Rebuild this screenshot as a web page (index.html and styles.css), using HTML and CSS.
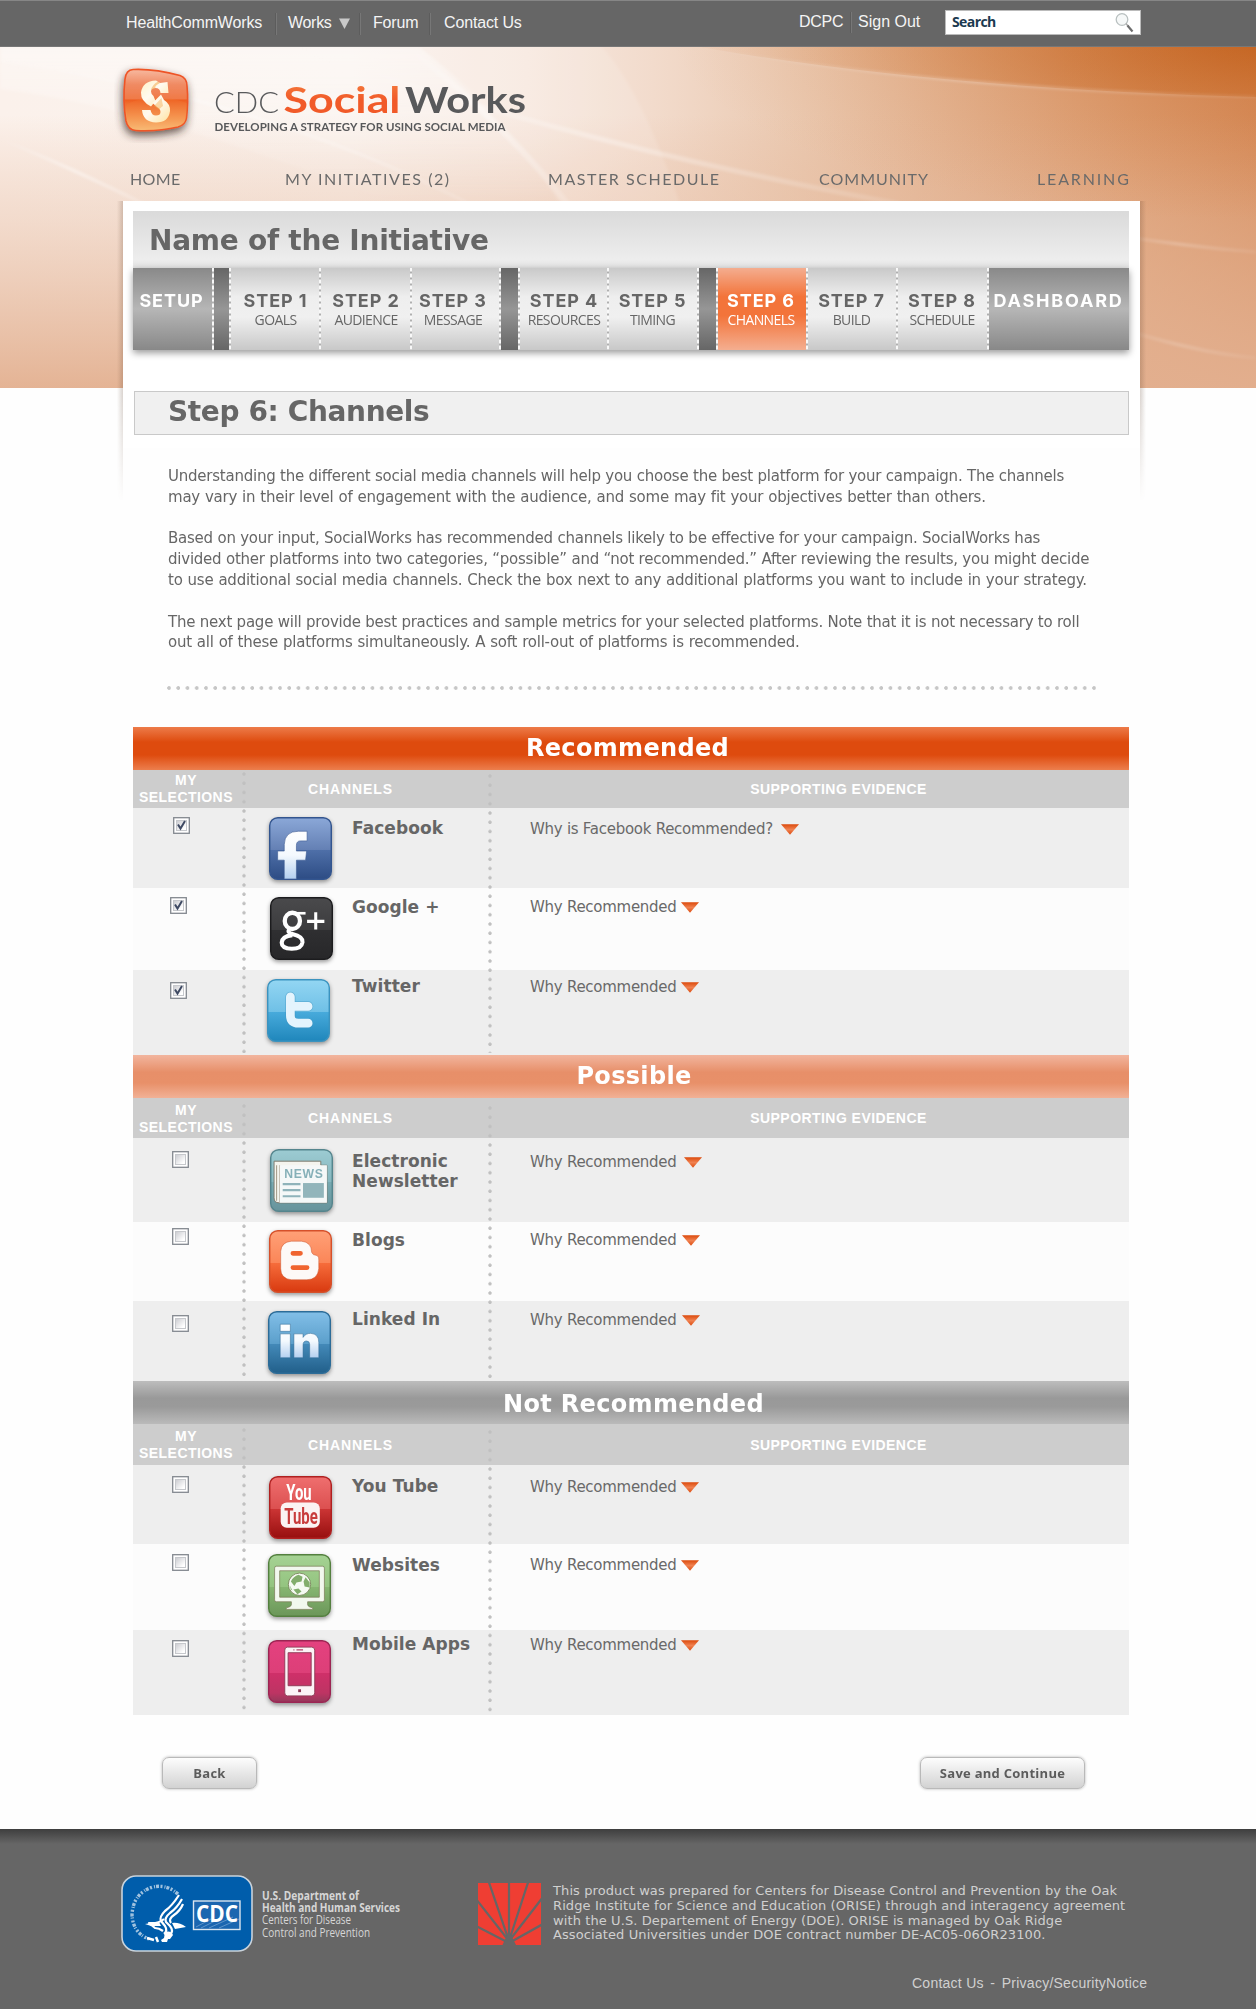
FILE: index.html
```html
<!DOCTYPE html>
<html lang="en">
<head>
<meta charset="utf-8">
<title>CDC SocialWorks - Step 6: Channels</title>
<link rel="stylesheet" href="styles.css">
</head>
<body>
<svg class="defs" aria-hidden="true">
  <defs>
    <linearGradient id="g-fb" x2="0" y2="1"><stop offset="0" stop-color="#8ba8d8"/><stop offset=".52" stop-color="#6480b4"/><stop offset=".53" stop-color="#4e6fa8"/><stop offset="1" stop-color="#2d4c84"/></linearGradient>
    <linearGradient id="g-gp" x2="0" y2="1"><stop offset="0" stop-color="#4a4a4c"/><stop offset=".52" stop-color="#3c3c3e"/><stop offset=".53" stop-color="#2f2f31"/><stop offset="1" stop-color="#272729"/></linearGradient>
    <linearGradient id="g-tw" x2="0" y2="1"><stop offset="0" stop-color="#93d6f3"/><stop offset=".52" stop-color="#6fc0e6"/><stop offset=".53" stop-color="#47aadb"/><stop offset="1" stop-color="#1f86bb"/></linearGradient>
    <linearGradient id="g-nw" x2="0" y2="1"><stop offset="0" stop-color="#9ccbd2"/><stop offset=".52" stop-color="#86b7bf"/><stop offset=".53" stop-color="#77a9b1"/><stop offset="1" stop-color="#67939b"/></linearGradient>
    <linearGradient id="g-bl" x2="0" y2="1"><stop offset="0" stop-color="#ffa077"/><stop offset=".52" stop-color="#fb8658"/><stop offset=".53" stop-color="#f66c3b"/><stop offset="1" stop-color="#d8390f"/></linearGradient>
    <linearGradient id="g-li" x2="0" y2="1"><stop offset="0" stop-color="#82bfe8"/><stop offset=".52" stop-color="#5b9fcb"/><stop offset=".53" stop-color="#4389b8"/><stop offset="1" stop-color="#215f8a"/></linearGradient>
    <linearGradient id="g-yt" x2="0" y2="1"><stop offset="0" stop-color="#ef6f6f"/><stop offset=".52" stop-color="#dc5050"/><stop offset=".53" stop-color="#cb3434"/><stop offset="1" stop-color="#970f0f"/></linearGradient>
    <linearGradient id="g-wb" x2="0" y2="1"><stop offset="0" stop-color="#a5d293"/><stop offset=".52" stop-color="#94c480"/><stop offset=".53" stop-color="#86b671"/><stop offset="1" stop-color="#6b9659"/></linearGradient>
    <linearGradient id="g-mb" x2="0" y2="1"><stop offset="0" stop-color="#e4417f"/><stop offset=".52" stop-color="#dd3f78"/><stop offset=".53" stop-color="#cf3069"/><stop offset=".85" stop-color="#bd3463"/><stop offset="1" stop-color="#93385a"/></linearGradient>
    <linearGradient id="g-glyph" x2="0" y2="1"><stop offset="0" stop-color="#fff"/><stop offset=".5" stop-color="#f4f9fe"/><stop offset="1" stop-color="#b4d0f0"/></linearGradient>
    <linearGradient id="g-tri" x2="0" y2="1"><stop offset="0" stop-color="#dc4a0c"/><stop offset=".5" stop-color="#f08150"/><stop offset="1" stop-color="#dc4a0c"/></linearGradient>
    <linearGradient id="g-box" x2="1" y2="1"><stop offset="0" stop-color="#c9cacf"/><stop offset=".8" stop-color="#fff"/></linearGradient>
    <symbol id="tri" viewBox="0 0 18 11"><path d="M0 .3h18L9 10.8z" fill="url(#g-tri)"/></symbol>
    <symbol id="check" viewBox="0 0 17 17">
      <rect x=".7" y=".7" width="15.600" height="15.600" fill="#fff" stroke="#83888f" stroke-width="1.300"/>
      <rect x="3.500" y="3.500" width="10" height="10" fill="url(#g-box)" stroke="#c6c8cc"/>
    </symbol>
  </defs>
</svg>

<div class="page">
  <div class="topbar">
    <nav class="topbar__links">
      <a class="tl tl--health">HealthCommWorks</a>
      <a class="tl tl--works">Works<svg width="11" height="11" viewBox="0 0 11 11"><path d="M0 .5h11L5.500 11z" fill="#c9c9c9"/></svg></a>
      <a class="tl tl--forum">Forum</a>
      <a class="tl tl--contact">Contact Us</a>
    </nav>
    <div class="topbar__user"><a class="tu tu--org">DCPC</a><a class="tu tu--out">Sign Out</a></div>
    <div class="search"><span>Search</span>
      <svg width="22" height="22" viewBox="0 0 22 22"><circle cx="8" cy="7.500" r="5.800" fill="#f6f8f8" stroke="#b9c0c0" stroke-width="1.300"/><path d="M12 11.500l2 2.500" stroke="#aaa" stroke-width="1.500"/><path d="M13.500 13.500l5 6" stroke="#6d6d6d" stroke-width="2.200"/></svg>
    </div>
  </div>

  <svg class="backdrop" viewBox="0 0 1256 341" preserveAspectRatio="none">
    <defs>
      <linearGradient id="b1"><stop offset="0" stop-color="#fbf1eb"/><stop offset=".28" stop-color="#faf2ed"/><stop offset=".42" stop-color="#f7e8df"/><stop offset=".52" stop-color="#f2dbcc"/><stop offset=".64" stop-color="#eac8af"/><stop offset=".78" stop-color="#e2b08d"/><stop offset=".9" stop-color="#dc9c70"/><stop offset="1" stop-color="#d68c5b"/></linearGradient>
      <linearGradient id="b2" x1="0" y1="0" x2="0" y2="1"><stop offset=".2" stop-color="#e3b090" stop-opacity="0"/><stop offset=".5" stop-color="#e6bba0" stop-opacity=".4"/><stop offset="1" stop-color="#e3b090" stop-opacity=".95"/></linearGradient>
      <radialGradient id="b3" gradientUnits="userSpaceOnUse" cx="0" cy="0" r="1" gradientTransform="translate(1290 -15) scale(620 190)"><stop offset="0" stop-color="#c25f1a"/><stop offset="1" stop-color="#d98a50" stop-opacity="0"/></radialGradient>
      <linearGradient id="b5" x1="0" y1="0" x2="0" y2="1"><stop offset="0" stop-color="#fff" stop-opacity=".35"/><stop offset="1" stop-color="#fff" stop-opacity="0"/></linearGradient>
      <linearGradient id="b6"><stop offset="0" stop-color="#fff" stop-opacity="0"/><stop offset=".5" stop-color="#fff" stop-opacity=".8"/><stop offset="1" stop-color="#fff" stop-opacity=".3"/></linearGradient>
      <filter id="soft" x="-5%" y="-20%" width="110%" height="140%"><feGaussianBlur stdDeviation="1.500"/></filter>
    </defs>
    <rect width="1256" height="341" fill="url(#b1)"/>
    <rect width="1256" height="341" fill="url(#b2)"/>
    <g filter="url(#soft)">
      <path d="M0 0H420Q500 60 560 155H390Q150 60 0 42z" fill="url(#b5)"/>
      <path d="M0 0H420Q490 60 560 155H470Q260 50 0 15z" fill="url(#b5)" opacity=".5"/>
      <path d="M420 -2Q500 60 560 157H680Q640 40 600 -2z" fill="#fff" opacity=".12"/>
    </g>
    <path d="M700 0Q940 42 1256 50V0z" fill="url(#b3)" opacity=".95"/>
    <rect x="640" width="616" height="200" fill="url(#b3)" opacity=".35"/>
    <g fill="none" stroke="url(#b6)" filter="url(#soft)">
      <path d="M700 0Q940 42 1256 50" stroke-width="2.500" opacity=".35"/>
      <path d="M300 0Q560 95 900 157" stroke-width="5" opacity=".4"/>
      <path d="M0 15Q260 50 470 157" stroke-width="3" opacity=".5"/>
      <path d="M400 -5Q500 70 570 160" stroke-width="6" opacity=".5"/>
      <path d="M0 92Q70 120 150 160" stroke-width="3" opacity=".6"/>
      <path d="M1100 186Q1190 200 1256 205" stroke-width="2.500" opacity=".35"/>
      <path d="M1100 275Q1190 305 1256 311" stroke-width="3" opacity=".25"/>
    </g>
  </svg>

  <header class="brand">
    <svg class="brand__mark" width="84" height="84" viewBox="0 0 84 84">
      <defs>
        <linearGradient id="m1" x2="0" y2="1"><stop offset="0" stop-color="#f7b9a0"/><stop offset=".25" stop-color="#f08a62"/><stop offset=".48" stop-color="#f07a48"/><stop offset=".5" stop-color="#ee5f22"/><stop offset=".8" stop-color="#f7a560"/><stop offset="1" stop-color="#fbd793"/></linearGradient>
        <linearGradient id="m2" x2="1" y2="1"><stop offset="0" stop-color="#fff3c8"/><stop offset=".45" stop-color="#fffaf0"/><stop offset="1" stop-color="#ffe3a0"/></linearGradient>
        <filter id="sh" x="-30%" y="-30%" width="160%" height="170%"><feDropShadow dx="-1" dy="4" stdDeviation="4" flood-color="#3a2a22" flood-opacity=".75"/></filter>
      </defs>
      <path filter="url(#sh)" d="M19 10.500Q40 9.500 66 16.500Q73 19 73 27Q74.500 42 72.500 59Q71.500 66 64 68Q45 72.500 22 71.500Q14 71 12 62Q8.500 42 11 20Q12 11 19 10.500z" fill="url(#m1)" stroke="#ee5427" stroke-width="1.600"/>
      <path d="M13 45Q40 32 73 44Q74 53 72 60Q71 66 64 67.500Q45 72 22 71Q14 70 12.500 62z" fill="#f27a35" opacity=".3"/>
      <g fill="url(#m2)">
        <path d="M54.500 34H46.500Q46 29 41.500 29Q37 29 37 32.500Q37 35 39.500 37L41.500 42L37 47.500Q26.500 42 27 33.500Q28.500 22 42 21.500L46 24L53.500 23z"/>
        <path d="M28 51H36.500Q37.500 56.500 42 56.500Q46.500 56.500 46.500 53Q46.500 50 43 48L38.500 44L47 35.500L50 41Q56.500 45 56 52Q54.500 63.500 42 63.500Q29 63 28 51z"/>
      </g>
      <path d="M37 31Q38 26 44 22.500L46 24Q40 27 41.500 29z" fill="#f3b35c" opacity=".6"/>
      <path d="M40 47L47.500 39L49 47Q45 49.500 46 51z" fill="#f3b35c" opacity=".5"/>
    </svg>
    <svg class="brand__name" width="320" height="60" viewBox="0 0 320 60">
      <defs><linearGradient id="m3" gradientUnits="userSpaceOnUse" x1="0" y1="6" x2="0" y2="36"><stop offset="0" stop-color="#f47a3c"/><stop offset=".6" stop-color="#f15a29"/></linearGradient></defs>
      <text class="wm wm--cdc" x="3" y="36.500" textLength="65" lengthAdjust="spacingAndGlyphs">CDC</text>
      <text class="wm wm--bold" x="72.500" y="36.500" textLength="117" lengthAdjust="spacingAndGlyphs" fill="url(#m3)">Social</text>
      <text class="wm wm--bold wm--works" x="194" y="36.500" textLength="121" lengthAdjust="spacingAndGlyphs">Works</text>
      <text class="wm wm--tag" x="3.500" y="55" textLength="291" lengthAdjust="spacing">DEVELOPING A STRATEGY FOR USING SOCIAL MEDIA</text>
    </svg>
  </header>
  <nav class="mainnav">
    <a class="mn mn--home">HOME</a><a class="mn">MY INITIATIVES (2)</a><a class="mn">MASTER SCHEDULE</a><a class="mn mn--comm">COMMUNITY</a><a class="mn mn--learn">LEARNING</a>
  </nav>

  <main class="panel">
    <h1 class="initiative">Name of the Initiative</h1>
    <ol class="steps">
      <li class="step step--end step--setup"><b>SETUP</b></li>
      <li class="step step--dark step--d1"></li>
      <li class="step"><b>STEP 1</b><span>GOALS</span></li>
      <li class="step step--91"><b>STEP 2</b><span>AUDIENCE</span></li>
      <li class="step step--89 step--msg"><b>STEP 3</b><span>MESSAGE</span></li>
      <li class="step step--dark"></li>
      <li class="step step--89"><b>STEP 4</b><span>RESOURCES</span></li>
      <li class="step step--nudge"><b>STEP 5</b><span>TIMING</span></li>
      <li class="step step--dark"></li>
      <li class="step step--on step--nudge"><b>STEP 6</b><span>CHANNELS</span></li>
      <li class="step step--nudge"><b>STEP 7</b><span>BUILD</span></li>
      <li class="step step--91 step--nudge"><b>STEP 8</b><span>SCHEDULE</span></li>
      <li class="step step--end step--dash"><b>DASHBOARD</b></li>
    </ol>
    <h2 class="steptitle">Step 6: Channels</h2>
    <div class="intro">
      <p>Understanding the different social media channels will help you choose the best platform for your campaign. The channels<br><span class="loose">may vary in their level of engagement with the audience, and some may fit your objectives better than others.</span></p>
      <p>Based on your input, SocialWorks has recommended channels likely to be effective for your campaign. SocialWorks has<br>divided other platforms into two categories, “possible” and “not recommended.” After reviewing the results, you might decide<br><span class="loose">to use additional social media channels. Check the box next to any additional platforms you want to include in your strategy.</span></p>
      <p>The next page will provide best practices and sample metrics for your selected platforms. Note that it is not necessary to roll<br><span class="loose">out all of these platforms simultaneously. A soft roll-out of platforms is recommended.</span></p>
    </div>
    <div class="dots"></div>

    <section class="group group--rec">
      <h3 class="group__title">Recommended</h3>
      <div class="group__body">
        <div class="cols"><span>MY<br>SELECTIONS</span><span>CHANNELS</span><span>SUPPORTING EVIDENCE</span></div>
        <div class="row row--fb">
          <div class="row__sel"><svg class="box" viewBox="0 0 17 17"><use href="#check"/><path d="M5 7.500L7.500 11.500L12 4" fill="none" stroke="#3f4a63" stroke-width="2"/></svg></div>
          <div class="row__chan"><svg class="icon" viewBox="0 0 62 62"><rect x=".7" y=".7" width="60.600" height="60.600" rx="8" fill="url(#g-fb)" stroke="#33558f" stroke-width="1.400"/><path d="M15 61V42.500H8.500V33.500H15V27Q15.500 14 29 14H37.500V23.500H31Q27 23.500 27 28V33.500H37L36 42.500H27V61z" fill="url(#g-glyph)" stroke="#3b5a92" stroke-width=".6"/></svg><span class="name">Facebook</span></div>
          <div class="row__why">Why is Facebook Recommended?<svg class="tri" viewBox="0 0 18 11"><use href="#tri"/></svg></div>
        </div>
        <div class="row row--alt row--gp">
          <div class="row__sel"><svg class="box" viewBox="0 0 17 17"><use href="#check"/><path d="M5 7.500L7.500 11.500L12 4" fill="none" stroke="#3f4a63" stroke-width="2"/></svg></div>
          <div class="row__chan"><svg class="icon" viewBox="0 0 62 62"><rect x=".7" y=".7" width="60.600" height="60.600" rx="8" fill="url(#g-gp)" stroke="#1c1c1e" stroke-width="1.400"/><g fill="none" stroke="#fff"><ellipse cx="22" cy="23.500" rx="7.500" ry="8" stroke-width="4.200"/><path d="M26 16H35" stroke-width="2.600"/><path d="M19.500 31Q16 35 22 36.500Q32.500 39 32 44.500Q31 51 21.500 51Q11.500 50.500 11.500 45Q12 38.500 22 37.500" stroke-width="4"/><path d="M36.500 24H53.500M45 15V32" stroke-width="3"/></g></svg><span class="name">Google +</span></div>
          <div class="row__why">Why Recommended<svg class="tri" viewBox="0 0 18 11"><use href="#tri"/></svg></div>
        </div>
        <div class="row row--tw">
          <div class="row__sel"><svg class="box" viewBox="0 0 17 17"><use href="#check"/><path d="M5 7.500L7.500 11.500L12 4" fill="none" stroke="#3f4a63" stroke-width="2"/></svg></div>
          <div class="row__chan"><svg class="icon" viewBox="0 0 62 62"><rect x=".7" y=".7" width="60.600" height="60.600" rx="8" fill="url(#g-tw)" stroke="#3b93bf" stroke-width="1.400"/><path d="M23 17.500V36Q23 44 31 44H40.500M23 27H40.500" fill="none" stroke="#3d93bf" stroke-width="10" stroke-linecap="round" opacity=".5"/><path d="M23 17.500V36Q23 43.500 31 43.500H40.500M23 27H40.500" fill="none" stroke="#e4f4fd" stroke-width="8.600" stroke-linecap="round"/></svg><span class="name">Twitter</span></div>
          <div class="row__why">Why Recommended<svg class="tri" viewBox="0 0 18 11"><use href="#tri"/></svg></div>
        </div>
      </div>
    </section>

    <section class="group group--pos">
      <h3 class="group__title">Possible</h3>
      <div class="group__body">
        <div class="cols"><span>MY<br>SELECTIONS</span><span>CHANNELS</span><span>SUPPORTING EVIDENCE</span></div>
        <div class="row row--nw">
          <div class="row__sel"><svg class="box" viewBox="0 0 17 17"><use href="#check"/></svg></div>
          <div class="row__chan"><svg class="icon" viewBox="0 0 62 62"><rect x=".7" y=".7" width="60.600" height="60.600" rx="8" fill="url(#g-nw)" stroke="#55858d" stroke-width="1.400"/><path d="M4 12H50V16H56V53H9Q4 53 4 48z" fill="#f4f4ee" stroke="#7b7568" stroke-width=".9"/><path d="M6.500 16V51M9.500 16V53" stroke="#a39a88"/><path d="M9.500 16H56V53H9.500z" fill="#f5f8f8"/><text x="14" y="29" class="glyph glyph--news" textLength="38">NEWS</text><path d="M12.500 34.500H30M12.500 40.500H30M12.500 46.500H30" stroke="#8fb3ba" stroke-width="2.200"/><path d="M32.500 33.500H53V48H32.500z" fill="#92b5bb"/></svg><span class="name">Electronic<br>Newsletter</span></div>
          <div class="row__why">Why Recommended<svg class="tri" viewBox="0 0 18 11"><use href="#tri"/></svg></div>
        </div>
        <div class="row row--alt row--bl">
          <div class="row__sel"><svg class="box" viewBox="0 0 17 17"><use href="#check"/></svg></div>
          <div class="row__chan"><svg class="icon" viewBox="0 0 62 62"><rect x=".7" y=".7" width="60.600" height="60.600" rx="8" fill="url(#g-bl)" stroke="#d6502a" stroke-width="1.400"/><path d="M22 11H32Q42 12 42 22Q43 25 47 25Q49.500 26 49 30V38Q48 49 37 49H22Q11.500 48 11.500 38V21Q12 12 22 11z" fill="#fdf9f7" stroke="#c9542c" stroke-width=".5"/><path d="M23.500 23H31M23.500 37H37.500" stroke="#f0642f" stroke-width="4.600" stroke-linecap="round"/></svg><span class="name">Blogs</span></div>
          <div class="row__why">Why Recommended<svg class="tri" viewBox="0 0 18 11"><use href="#tri"/></svg></div>
        </div>
        <div class="row row--li">
          <div class="row__sel"><svg class="box" viewBox="0 0 17 17"><use href="#check"/></svg></div>
          <div class="row__chan"><svg class="icon" viewBox="0 0 62 62"><rect x=".7" y=".7" width="60.600" height="60.600" rx="8" fill="url(#g-li)" stroke="#2c6c98" stroke-width="1.400"/><path d="M12 13H22V20H12zM12 22.500H22V46H12zM25.500 22.500H34.500V26Q37 22 42 22Q50 22.500 50 31V46H41V33Q41 29.500 38 29.500Q34.500 29.500 34.500 33.500V46H25.500z" fill="url(#g-glyph)" stroke="#2c6693" stroke-width=".5"/></svg><span class="name">Linked In</span></div>
          <div class="row__why">Why Recommended<svg class="tri" viewBox="0 0 18 11"><use href="#tri"/></svg></div>
        </div>
      </div>
    </section>

    <section class="group group--not">
      <h3 class="group__title">Not Recommended</h3>
      <div class="group__body">
        <div class="cols"><span>MY<br>SELECTIONS</span><span>CHANNELS</span><span>SUPPORTING EVIDENCE</span></div>
        <div class="row row--yt">
          <div class="row__sel"><svg class="box" viewBox="0 0 17 17"><use href="#check"/></svg></div>
          <div class="row__chan"><svg class="icon" viewBox="0 0 62 62"><rect x=".7" y=".7" width="60.600" height="60.600" rx="8" fill="url(#g-yt)" stroke="#b02020" stroke-width="1.400"/><rect x="11.500" y="26" width="38.500" height="25" rx="6" fill="#fbf3f3"/><g transform="scale(1 1.200)"><text x="17" y="19.600" class="glyph glyph--you" textLength="25" lengthAdjust="spacingAndGlyphs">You</text><text x="15" y="39" class="glyph glyph--tube" textLength="33" lengthAdjust="spacingAndGlyphs">Tube</text></g></svg><span class="name">You Tube</span></div>
          <div class="row__why">Why Recommended<svg class="tri" viewBox="0 0 18 11"><use href="#tri"/></svg></div>
        </div>
        <div class="row row--alt row--wb">
          <div class="row__sel"><svg class="box" viewBox="0 0 17 17"><use href="#check"/></svg></div>
          <div class="row__chan"><svg class="icon" viewBox="0 0 62 62"><rect x=".7" y=".7" width="60.600" height="60.600" rx="8" fill="url(#g-wb)" stroke="#54803f" stroke-width="1.400"/><path fill-rule="evenodd" d="M8 12H54Q55.500 12 55.500 14V45Q55.500 47 54 47H39V50Q39 52 44 53V54.500H18V53Q23 52 23 50V47H8Q6.500 47 6.500 45V14Q6.500 12 8 12zM11.500 16.500V42.500H50.500V16.500z" fill="#f2f8ee" stroke="#7b7a58" stroke-width=".7"/><circle cx="31" cy="29.800" r="11" fill="#f5faf2" stroke="#6e7a4d" stroke-width=".8"/><path d="M30 20.500Q25 22 22.500 27L26 31.500L28 28L33 27L34 22.500zM37 23L41 28V33L36 32L35 27zM25 35L30 34L33 37L29 39.500zM21.500 31L24 36L22.500 35z" fill="#82ad6c"/></svg><span class="name">Websites</span></div>
          <div class="row__why">Why Recommended<svg class="tri" viewBox="0 0 18 11"><use href="#tri"/></svg></div>
        </div>
        <div class="row row--mb">
          <div class="row__sel"><svg class="box" viewBox="0 0 17 17"><use href="#check"/></svg></div>
          <div class="row__chan"><svg class="icon" viewBox="0 0 62 62"><rect x=".7" y=".7" width="60.600" height="60.600" rx="8" fill="url(#g-mb)" stroke="#9c2553" stroke-width="1.400"/><path fill-rule="evenodd" d="M19 7H43Q46 7 46 10V52Q46 55 43 55H19Q16.500 55 16.500 52V10Q16.500 7 19 7zM19.800 12.500V45H42.500V12.500z" fill="#fcf3f6" stroke="#8d3a55" stroke-width=".9"/><path d="M28 9.800H34.500M25 9.800H26" stroke="#b04468" stroke-width="1.200"/><rect x="29.700" y="48.500" width="2.800" height="2.800" fill="#8d3a55"/></svg><span class="name">Mobile Apps</span></div>
          <div class="row__why">Why Recommended<svg class="tri" viewBox="0 0 18 11"><use href="#tri"/></svg></div>
        </div>
      </div>
    </section>

    <div class="actions"><button class="btn btn--back">Back</button><button class="btn btn--save">Save and Continue</button></div>
  </main>

  <footer class="footer">
    <div class="footer__main">
      <svg class="cdc" width="132" height="77" viewBox="0 0 132 77">
        <rect x="1" y="1" width="130" height="75" rx="14" fill="#005dab" stroke="#c9d3dc" stroke-width="1.600"/>
        <path d="M57 19Q46 9 32 12Q12 18 11 40Q12 58 28 64" fill="none" stroke="#d6e4f0" stroke-width="3.400" stroke-dasharray="3 1 1 2 2 1.500" opacity=".75"/>
        <g fill="none" stroke="#fff" stroke-width="2.200" stroke-linejoin="round"><path d="M58 20Q51 31 44 36Q38 42 40 46L44 51Q47 56 43 59"/><path d="M61 24Q56 33 49 38Q43 43 45 47L49 51Q53 56 49 60"/><path d="M62 29Q59 36 53 40Q47 44 50 48"/><path d="M43 44Q37 49 28 48L34 53Q38 53 42 56"/></g>
        <path d="M44 57Q50 55 52 60L49 64H47L46 67L41 67L40 65L43 63zM24 49L38 47L40 51L30 51zM51 48Q58 47 65 52L54 54z" fill="#fff"/>
        <path d="M26 63L33 65M35 62L37 67" stroke="#fff" stroke-width="2.500"/>
        <rect x="72.500" y="26" width="46.500" height="28.500" fill="#1b66b0" stroke="#dbe6f0" stroke-width="1.400"/>
        <path d="M75 52L90 44M80 53L100 43M88 53L112 42M98 53L118 44" stroke="#6f9fcf" stroke-width=".8"/>
        <text x="75" y="46.500" class="cdc__txt" textLength="42" lengthAdjust="spacingAndGlyphs">CDC</text>
      </svg>
      <svg class="dept" width="150" height="56" viewBox="0 0 150 56">
        <g class="dept__b"><text x="0" y="13.500" textLength="97" lengthAdjust="spacingAndGlyphs">U.S. Department of</text><text x="0" y="26" textLength="138" lengthAdjust="spacingAndGlyphs">Health and Human Services</text></g>
        <g class="dept__r"><text x="0" y="38" textLength="89" lengthAdjust="spacingAndGlyphs">Centers for Disease</text><text x="0" y="50.500" textLength="108" lengthAdjust="spacingAndGlyphs">Control and Prevention</text></g>
      </svg>
      <svg class="orise" width="63" height="62" viewBox="0 0 63 62"><rect width="63" height="62" fill="#ef3e33"/><path d="M31 58L10.500 -2M31 58V-2M31 58L50.500 -2M31 58L-2 16M31 58L65 14M31 60L-2 43M31 60L65 41" stroke="#666" stroke-width="2.200"/><path d="M24.500 62L31 48L38 62z" fill="#666"/></svg>
      <p class="legal">This product was prepared for Centers for Disease Control and Prevention by the Oak<br>Ridge Institute for Science and Education (ORISE) through and interagency agreement<br>with the U.S. Departement of Energy (DOE). ORISE is managed by Oak Ridge<br>Associated Universities under DOE contract number DE-AC05-06OR23100.</p>
    </div>
    <div class="footer__links"><a>Contact Us</a><span>-</span><a>Privacy/SecurityNotice</a></div>
  </footer>
</div>
</body>
</html>
```
FILE: styles.css
```css
* { box-sizing: border-box; }
body { margin: 0; background: #fefefe; color: #696969; font-family: "DejaVu Sans", Verdana, sans-serif; }
h1, h2, h3, p, ol { margin: 0; padding: 0; }
svg { display: block; flex: none; }
.defs { position: absolute; width: 0; height: 0; }
.page { position: relative; width: 1256px; height: 2009px; overflow: hidden; }

/* top bar */
.topbar { position: relative; z-index: 1; display: flex; height: 47px; padding-left: 126px; background: #666; border-top: 1px solid #868686; border-bottom: 1px solid #777; color: #f4f4f4; font: 16px/20px "Liberation Sans", Arial, sans-serif; white-space: nowrap; }
.topbar__links { display: flex; padding-top: 12px; width: 673px; }
.tl { display: flex; height: 22px; border-right: 1px solid #777; box-shadow: inset -1px 0 #5c5c5c; letter-spacing: -.15px; }
.tl--health { width: 151px; }
.tl--works { width: 84px; padding-left: 11px; gap: 7px; letter-spacing: -.3px; }
.tl--works svg { margin-top: 5px; }
.tl--forum { width: 70px; padding-left: 12px; }
.tl--contact { padding-left: 13px; border: 0; box-shadow: none; }
.topbar__user { display: flex; padding-top: 11px; width: 146px; }
.tu--org { width: 53px; height: 21px; border-right: 1px solid #777; box-shadow: inset -1px 0 #5c5c5c; letter-spacing: -.3px; }
.tu--out { padding-left: 6px; }
.search { display: flex; justify-content: space-between; width: 196px; height: 25px; margin-top: 9px; padding: 1px 4px 0 6px; background: #fff; border: 1px solid #bbb; color: #1c3a50; font: bold 14px/20px "Open Sans", sans-serif; letter-spacing: -.6px; }

/* header */
.backdrop { position: absolute; top: 47px; left: 0; width: 1256px; height: 341px; }
.brand { position: relative; display: flex; height: 120px; padding: 12px 0 0 114px; }
.brand__name { margin: 17px 0 0 13px; overflow: visible; }
.wm { font-family: Lato, sans-serif; }
.wm--cdc { font-size: 29px; font-weight: 300; fill: #58595b; }
.wm--bold { font-size: 37px; font-weight: 700; }
.wm--works { fill: #58595b; }
.wm--tag { font-size: 11.5px; font-weight: 700; fill: #58595b; }
.mainnav { position: relative; display: grid; grid-template-columns: 155px 263px 271px 218px auto; height: 34px; padding: 2px 0 0 130px; font: 16px/20px Lato, sans-serif; color: #6a6a6a; white-space: nowrap; }
.mn { letter-spacing: 1.55px; }
.mn--home { letter-spacing: .35px; }
.mn--comm { letter-spacing: 1px; }
.mn--learn { letter-spacing: 1.85px; }

/* panel */
.panel { position: relative; z-index: 0; width: 1017px; height: 1628px; margin-left: 123px; padding: 10px 10px 0; }
.panel::before { content: ""; position: absolute; z-index: -1; inset: 0 -6px auto; height: 300px; background: linear-gradient(to right, transparent, rgba(90,60,40,.22) 6px, #fff 6px, #fff calc(100% - 6px), rgba(90,60,40,.22) calc(100% - 6px), transparent); mask-image: linear-gradient(#000 65%, transparent); }
.initiative { height: 57px; padding: 12px 0 0 16px; background: linear-gradient(#dadada, #ededed 85%, #e2e2e2); font-size: 28px; line-height: 36px; letter-spacing: -.26px; color: #666; width: 996px; }
.steps { display: flex; width: 996px; height: 82px; list-style: none; box-shadow: 0 3px 7px rgba(0,0,0,.4); text-align: center; white-space: nowrap; }
.step { position: relative; width: 90px; padding-top: 23px; background: linear-gradient(#c9c9c9, #eee 35%, #f0f0f0 60%, #c8c8c8); color: #666; border-left: 1px solid #f4f4f4; flex: none; }
.step::after { content: ""; position: absolute; top: 0; bottom: 0; right: -1px; width: 2px; background: repeating-linear-gradient(#f8f8f8 0 3px, #b0b0b0 4px 5px, #f8f8f8 6px); z-index: 1; }
.step b { display: block; font: bold 18px/20px Inter, sans-serif; letter-spacing: .93px; }
.step span { display: block; padding-top: 1px; font: 14px/16px "Open Sans", sans-serif; letter-spacing: -.6px; }
.step--91 { width: 91px; }
.step--89 { width: 89px; }
.step--nudge { padding-right: 2px; }
.step--msg { padding-right: 6px; }
.step--dark { width: 19px; background: linear-gradient(#666, #969696 50%, #666); border: 0; }
.step--d1 { width: 17px; }
.step--end { background: linear-gradient(#898989, #b6b6b6 50%, #888); color: #fff; border: 0; }
.step--setup { width: 80px; padding-right: 3px; }
.step--dash { width: 141px; }
.step--dash b { letter-spacing: 1.8px; }
.step--dash::after { display: none; }
.step--on { background: linear-gradient(#f4ad8f, #f3743a 35%, #f3743a 58%, #f4ae90); color: #fff; border: 0; }
.steptitle { width: 995px; height: 44px; margin: 41px 0 0 1px; padding-left: 33px; background: #f0f0f0; border: 1px solid #c9c9c9; color: #666; font-size: 28px; line-height: 40px; letter-spacing: -.37px; }
.intro { padding: 31px 0 0 35px; font-size: 15px; line-height: 20.8px; letter-spacing: -.23px; white-space: nowrap; color: #666; }
.intro p + p { margin-top: 20.8px; }
.loose { word-spacing: .42px; }
.dots { width: 929px; height: 4px; margin: 33px 0 0 34px; background: radial-gradient(circle at 2px 2px, #c6c6c6 1.500px, transparent 2.200px) 0 0 / 9.25px 4px; }

/* channel groups */
.group { width: 996px; }
.group--rec { margin-top: 37px; }
.group__title { height: 43px; color: #fff; font-size: 24px; line-height: 43px; letter-spacing: .33px; text-align: center; }
.group--rec .group__title { padding-right: 7px; background: linear-gradient(#ed7b49, #de4b0e 35%, #de4b0e 65%, #ec7e4d); }
.group--pos .group__title { padding-left: 6px; background: linear-gradient(#f2b59e, #e78f69 40%, #e89069 65%, #f1b196); }
.group--not .group__title { padding-left: 5px; line-height: 46px; background: linear-gradient(#bdbdbd, #999 40%, #9a9a9a 60%, #bababa); }
.group__body { position: relative; }
.group__body::before, .group__body::after { content: ""; position: absolute; z-index: 1; top: var(--dl); bottom: 2px; left: 109px; width: 4px; background: radial-gradient(circle at 2px 2px, #c0c0c0 1.300px, transparent 2.100px) 0 0 / 4px 9.25px; }
.group__body::after { left: 355px; top: var(--dr); }
.group--rec { --dl: 2px; --dr: 4px; }
.group--pos { --dl: 6px; --dr: 8px; }
.group--not { --dl: 4px; --dr: 6px; }
.cols, .row { display: grid; grid-template-columns: 111px 246px 1fr; }
.cols { height: 38px; align-items: center; background: #cdcdcd; color: #fff; font: bold 14px/17px "Liberation Sans", Arial, sans-serif; letter-spacing: .45px; text-align: center; }
.cols span:nth-child(1) { margin-right: 5px; }
.cols span:nth-child(2) { margin-right: 33px; letter-spacing: .88px; }
.cols span:nth-child(3) { margin-left: 58px; }
.group--pos .cols { height: 40px; padding-top: 1px; }
.group--not .cols { height: 41px; padding-top: 1px; }
.row { height: var(--h); background: #eee; }
.row--alt { background: #fcfcfc; }
.row__sel { padding: var(--cy) 0 0 var(--cx, 39px); }
.box { width: 17px; height: 17px; }
.row__chan { display: grid; grid-template-columns: 108px 1fr; }
.icon { width: 63px; height: 63px; margin: var(--iy) 0 0 var(--ix, 24px); overflow: visible; filter: drop-shadow(0 2px 2px rgba(0,0,0,.4)); }
.name { padding-top: var(--ny); color: #666; font-size: 17px; font-weight: bold; line-height: 20px; letter-spacing: .06px; white-space: nowrap; }
.row__why { display: flex; padding: var(--wy) 0 0 40px; font-size: 15px; line-height: 20px; letter-spacing: -.27px; white-space: nowrap; }
.tri { width: 18px; height: 11px; margin: 5px 0 0 var(--tx, 4px); }
.row--fb { --h: 80px; --cx: 40px; --cy: 9px; --ix: 25px; --iy: 9px; --ny: 10px; --wy: 11px; --tx: 8px; }
.row--gp { --h: 82px; --cx: 37px; --cy: 9px; --ix: 26px; --iy: 9px; --ny: 9px; --wy: 9px; }
.row--tw { --h: 85px; --cx: 37px; --cy: 12px; --ix: 23px; --iy: 9px; --ny: 6px; --wy: 7px; }
.row--nw { --h: 84px; --cy: 13px; --ix: 26px; --iy: 11px; --ny: 13px; --wy: 14px; --tx: 7px; }
.row--bl { --h: 79px; --cy: 6px; --ix: 25px; --iy: 8px; --ny: 8px; --wy: 8px; --tx: 5px; }
.row--li { --h: 80px; --cy: 14px; --iy: 10px; --ny: 8px; --wy: 9px; --tx: 5px; }
.row--yt { --h: 79px; --cy: 11px; --ix: 25px; --iy: 11px; --ny: 11px; --wy: 12px; }
.row--wb { --h: 86px; --cy: 10px; --iy: 10px; --ny: 11px; --wy: 11px; }
.row--mb { --h: 85px; --cy: 10px; --iy: 10px; --ny: 4px; --wy: 5px; }
.glyph { font-family: "Liberation Sans", Arial, sans-serif; font-weight: bold; }
.glyph--news { font-size: 12px; fill: #86b0b8; }
.glyph--you { font-family: Roboto, sans-serif; font-size: 18px; font-weight: 700; fill: #fff; }
.glyph--tube { font-family: Roboto, sans-serif; font-size: 18px; font-weight: 700; fill: #c83c3c; }

.actions { display: flex; justify-content: space-between; padding: 42px 45px 0 29px; }
.btn { height: 32px; padding: 0; border: 1px solid #b9b9b9; border-radius: 7px; background: linear-gradient(#fdfdfd, #d2d2d2); box-shadow: 0 0 3px rgba(0,0,0,.3); color: #5c5c5c; font: bold 13px/20px "Open Sans", sans-serif; letter-spacing: .27px; }
.btn--back { width: 95px; }
.btn--save { width: 165px; }

/* footer */
.footer { height: 180px; padding-top: 46px; background: linear-gradient(#3e3e3e, #666 15px); color: #d0d0d0; }
.footer__main { display: flex; padding-left: 121px; height: 98px; }
.dept { margin: 11px 0 0 9px; font-family: "Open Sans", sans-serif; font-size: 12px; fill: #d6d6d6; }
.dept__b { font-weight: 700; }
.cdc__txt { font: bold 24px "Open Sans", sans-serif; fill: #fff; }
.orise { margin: 8px 0 0 66px; }
.legal { margin: 9px 0 0 12px; font-size: 13px; line-height: 14.8px; letter-spacing: .1px; white-space: nowrap; }
.footer__links { display: flex; padding-left: 912px; font: 14px/20px "Liberation Sans", Arial, sans-serif; letter-spacing: .25px; }
.footer__links span { width: 18px; text-align: center; }
```
